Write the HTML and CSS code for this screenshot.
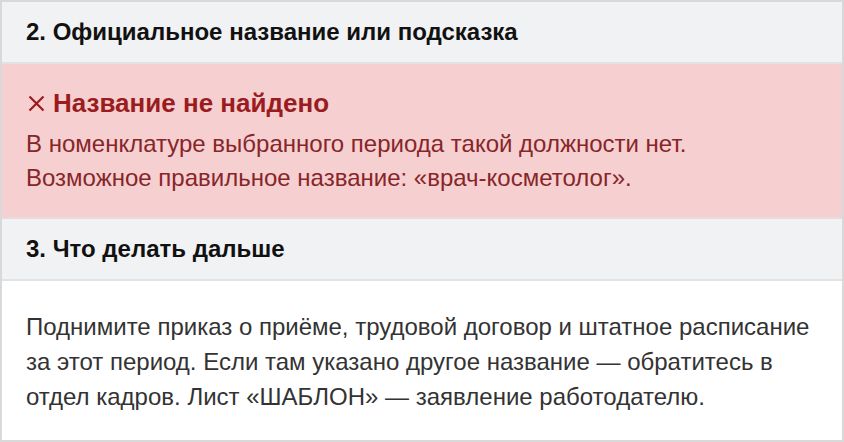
FILE: index.html
```html
<!DOCTYPE html>
<html lang="ru">
<head>
  <meta charset="UTF-8" />
  <title>Проверка должности</title>
  <link rel="stylesheet" href="styles.css">
</head>
<body>
  <div class="card">
    <div class="section-head">2. Официальное название или подсказка</div>
    <div class="alert">
      <div class="alert-title">
        <svg class="cross" width="17" height="17" viewBox="0 0 17 17"><path d="M1.5 1.5l14 14M15.5 1.5l-14 14" stroke="currentColor" stroke-width="2.2" fill="none"/></svg>
        Название не найдено
      </div>
      <p>В номенклатуре выбранного периода такой должности нет.<br>Возможное правильное название: «врач-косметолог».</p>
    </div>
    <div class="section-head">3. Что делать дальше</div>
    <div class="section-body">
      <p>Поднимите приказ о приёме, трудовой договор и штатное расписание за этот период. Если там указано другое название — обратитесь в отдел кадров. Лист «ШАБЛОН» — заявление работодателю.</p>
    </div>
  </div>
</body>
</html>
```

FILE: styles.css
```css
html, body {
  margin: 0;
  height: 100%;
}

body {
  font-family: 'Liberation Sans', Arial, sans-serif;
  background: #fff;
}

.card {
  box-sizing: border-box;
  height: 442px;
  border: 2px solid #d9d9d9;
  display: flex;
  flex-direction: column;
}

.section-head {
  height: 60px;
  display: flex;
  align-items: center;
  padding: 0 24px;
  background: #f1f2f4;
  border-bottom: 2px solid #e1e2e4;
  font-size: 24px;
  font-weight: bold;
  color: #111;
}

.alert {
  height: 155px;
  box-sizing: border-box;
  padding: 24px 24px 0;
  background: #f6cfd0;
  border-bottom: 2px solid #e9d9da;
  color: #86262a;
}

.alert-title {
  font-size: 26px;
  line-height: 30px;
  font-weight: bold;
  color: #9a1c20;
  display: flex;
  align-items: center;
  gap: 8px;
}

.cross {
  margin-left: 2px;
  flex: none;
}

.alert p {
  margin: 9px 0 0;
  font-size: 24px;
  line-height: 34px;
}

.section-body {
  flex: 1;
  padding: 28px 24px 0;
  color: #333;
}

.section-body p {
  margin: 0;
  font-size: 24px;
  line-height: 35px;
}
```
